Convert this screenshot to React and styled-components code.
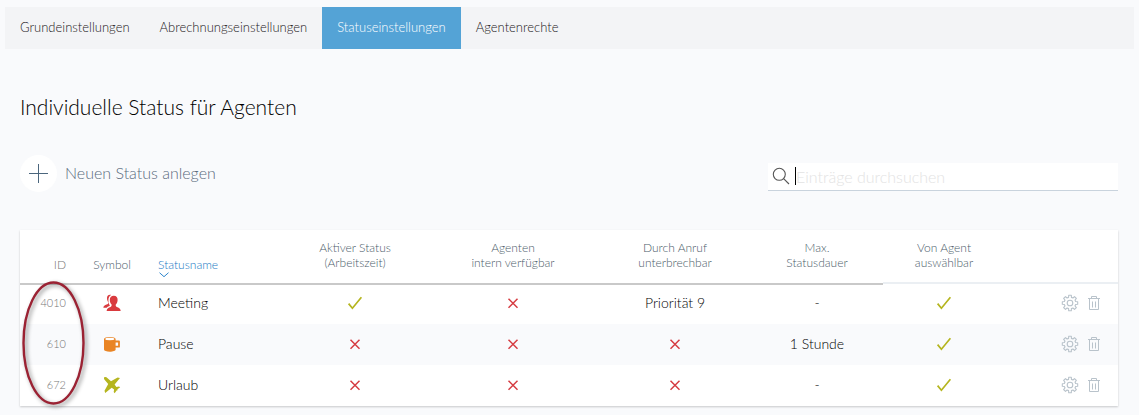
import React from 'react';
import styled, { createGlobalStyle, css } from 'styled-components';

const GlobalStyle = createGlobalStyle`
  * { box-sizing: border-box; }
  body {
    margin: 0;
    background: #f9fafc;
    font-family: Lato, "Liberation Sans", sans-serif;
    font-weight: 300;
    color: #000;
  }
`;

const Page = styled.div`
  padding: 7px 5px 9px;
`;

const TabBar = styled.nav`
  display: flex;
  background: #f3f4f6;
`;

const Tab = styled.a`
  padding: 0 15px 1px;
  font-size: 13px;
  line-height: 41px;
  text-decoration: none;
  white-space: nowrap;
  color: ${(p) => (p.$active ? '#fff' : '#1d2023')};
  background: ${(p) => (p.$active ? '#54a3d6' : 'transparent')};
`;

const Content = styled.main`
  padding: 43px 16px 0 15px;
`;

const Title = styled.h1`
  margin: 0;
  font-size: 21px;
  line-height: 30px;
  font-weight: 300;
`;

const Toolbar = styled.div`
  display: flex;
  justify-content: space-between;
  align-items: center;
  margin: 33px 0 38px;
`;

const AddButton = styled.button`
  display: flex;
  align-items: center;
  gap: 8px;
  padding: 0;
  border: 0;
  background: none;
  font: inherit;
  font-size: 16px;
  color: #5a6b7c;
  cursor: pointer;
`;

const AddLabel = styled.span`
  padding-bottom: 3px;
`;

const AddCircle = styled.span`
  display: flex;
  width: 37px;
  height: 37px;
  border-radius: 50%;
  background: #fff;
  align-items: center;
  justify-content: center;
`;

const SearchField = styled.label`
  display: flex;
  align-items: center;
  flex: 0 1 350px;
  height: 28px;
  margin-top: 6px;
  padding-left: 4px;
  background: #fff;
  border-bottom: 1px solid #c9d3dd;
`;

const Caret = styled.span`
  width: 1px;
  height: 18px;
  margin-left: 5px;
  background: #000;
`;

const SearchInput = styled.input`
  flex: 1;
  min-width: 0;
  padding: 0;
  border: 0;
  outline: 0;
  background: none;
  font: inherit;
  font-size: 16px;
  color: #111;
  &::placeholder { color: #e3e3e3; opacity: 1; }
`;

const Card = styled.section`
  position: relative;
  background: #fff;
  box-shadow: 0 1px 2px rgba(0, 0, 0, 0.2);
`;

const Table = styled.table`
  width: 100%;
  table-layout: fixed;
  border-collapse: collapse;
`;

const Col = styled.col`
  width: ${(p) => p.$w}px;
`;

const HeadCell = styled.th`
  height: 53px;
  padding: ${(p) => (p.$single ? '0 10px 11px' : '0 0 13px')};
  vertical-align: bottom;
  text-align: ${(p) => p.$align || 'center'};
  font-size: 12px;
  line-height: 15px;
  font-weight: 300;
  white-space: nowrap;
  color: ${(p) => p.$color || '#4c5d6a'};
  ${(p) => p.$light && css`box-shadow: inset 0 -1px 0 #ebeff3;`}
`;

const SortButton = styled.button`
  position: relative;
  display: block;
  padding: 0;
  border: 0;
  background: none;
  font: inherit;
  color: #2079c4;
  cursor: pointer;
  svg { position: absolute; left: 1px; top: 15px; }
`;

const Row = styled.tr`
  height: 41px;
  background: ${(p) => (p.$shaded ? '#f9fafc' : '#fff')};
  &:first-child td { box-shadow: inset 0 2px 0 #c9c9c9; }
  &:first-child td:nth-child(n + 8) { box-shadow: inset 0 1px 0 #ebeff3; }
`;

const Cell = styled.td`
  padding: 0 ${(p) => (p.$pad ? '10px' : '0')} 2px;
  text-align: ${(p) => p.$align || 'center'};
  font-size: ${(p) => (p.$muted ? '11px' : '14px')};
  color: ${(p) => (p.$muted ? '#777' : '#000')};
  white-space: nowrap;
  svg { display: block; margin: 0 auto; }
`;

const Actions = styled.div`
  display: flex;
  justify-content: flex-end;
  gap: 8px;
  padding-right: 17px;
`;

const IconButton = styled.button`
  padding: 0;
  border: 0;
  background: none;
  cursor: pointer;
`;

const Marker = styled.svg`
  position: absolute;
  left: 0;
  top: 48px;
  pointer-events: none;
  filter: drop-shadow(2px 2px 2px rgba(0, 0, 0, 0.45));
`;

const Check = () => (
  <svg width="16" height="16" viewBox="0 0 16 16" role="img" aria-label="Ja">
    <path d="M1.600 8.600 5.400 13.200 14.400 2.200" fill="none" stroke="#b5b51f" strokeWidth="1.7" />
  </svg>
);

const Cross = () => (
  <svg width="16" height="16" viewBox="0 0 16 16" role="img" aria-label="Nein">
    <path d="M3.5 3.8 12.5 12.8M12.5 3.8 3.5 12.8" stroke="#d63c42" strokeWidth="1.5" />
  </svg>
);

const People = () => (
  <svg width="18" height="18" viewBox="0 0 18 18" fill="#d93a3e">
    <path d="M8.200 1C5.500.3 3.800 2 4 4.600c.1 1.600.6 2.800 1.300 3.700.2 1-.1 1.600-1 2C2.200 11.100.6 11.400.3 13.700h3.400c.8-1 2-1.500 3.200-2C6 10.300 5.400 8.500 5.400 6.300 5.400 3.800 6.400 1.900 8.200 1Z" />
    <path d="M10.800 1.800c-2.700 0-4.100 1.800-4 4.300.1 2 .8 3.500 1.800 4.500.2 1.300-.2 2-1.100 2.400-1.900.8-3.600 1.200-3.900 4h14.100c-.3-2.800-2-3.200-3.900-4-.9-.4-1.300-1.100-1-2.400 1-1 1.700-2.500 1.800-4.500.1-2.500-1.100-4.300-3.800-4.300Z" />
  </svg>
);

const Cup = () => (
  <svg width="18" height="18" viewBox="0 0 18 18">
    <path d="M12 6.500h4v5.200h-4" fill="none" stroke="#e98424" strokeWidth="1.800" strokeLinejoin="round" />
    <path d="M1 4v10.500c0 1.300 2.600 2.200 5.800 2.200s5.800-.9 5.800-2.200V4c0-1.200-2.600-2.100-5.800-2.100S1 2.800 1 4Z" fill="#e98424" />
    <ellipse cx="6.800" cy="4" rx="4.600" ry="1.200" fill="#fff" />
  </svg>
);

const Plane = () => (
  <svg width="18" height="18" viewBox="0 0 18 18" fill="#b5b51f">
    <path d="M1.300 1.300C2.200.6 3.600 1.200 4.600 2.200L8 5.200l6.600-3.700L17 2.100 11.600 8.600l1.800 2.300 2.600-.5 1.200.9-2.800 2 .2 1-1 .1-1.900 2.800-1-1.200.4-2.600-2.400-1.700-6.500 5.400-.7-2.400L5.200 8 2.200 4.600C1.200 3.600.5 2.200 1.300 1.300Z" />
  </svg>
);

const gearPath = (() => {
  const points = [];
  for (let i = 0; i < 8; i += 1) {
    [[-0.25, 5.8], [-0.17, 7.8], [0.17, 7.8], [0.25, 5.8]].forEach(([d, r]) => {
      const a = (i * Math.PI) / 4 + d;
      points.push(`${(9 + r * Math.sin(a)).toFixed(2)} ${(9 - r * Math.cos(a)).toFixed(2)}`);
    });
  }
  return `M${points.join('L')}Z`;
})();

const Gear = () => (
  <svg width="18" height="18" viewBox="0 0 18 18" fill="none" stroke="#b9c3cb" strokeWidth="1.1" strokeLinejoin="round">
    <path d={gearPath} />
    <circle cx="9" cy="9" r="2.800" />
  </svg>
);

const Trash = () => (
  <svg width="14" height="18" viewBox="0 0 14 18" fill="none" stroke="#b9c3cb">
    <path d="M1 4.500h12M4.500 4V2.500h5V4M2.500 5v10.500h9V5M5.500 7.500v6M8.500 7.500v6" />
  </svg>
);

const rows = [
  { id: 4010, Icon: People, name: 'Meeting', active: true, intern: false, interrupt: 'Priorität 9', max: '-', selectable: true },
  { id: 610, Icon: Cup, name: 'Pause', active: false, intern: false, interrupt: false, max: '1 Stunde', selectable: true },
  { id: 672, Icon: Plane, name: 'Urlaub', active: false, intern: false, interrupt: false, max: '-', selectable: true },
];

const tabs = ['Grundeinstellungen', 'Abrechnungseinstellungen', 'Statuseinstellungen', 'Agentenrechte'];
const colWidths = [56, 72, 135, 144, 172, 152, 132, 122, 113];

const Value = ({ value }) => {
  if (value === true) return <Check />;
  if (value === false) return <Cross />;
  return value;
};

export default function App() {
  return (
    <Page>
      <GlobalStyle />
      <TabBar>
        {tabs.map((tab) => (
          <Tab key={tab} href="#" $active={tab === 'Statuseinstellungen'}>{tab}</Tab>
        ))}
      </TabBar>
      <Content>
        <Title>Individuelle Status für Agenten</Title>
        <Toolbar>
          <AddButton type="button">
            <AddCircle>
              <svg width="19" height="19" viewBox="0 0 19 19" stroke="#4b667d">
                <path d="M9.500 0v19M0 9.500h19" />
              </svg>
            </AddCircle>
            <AddLabel>Neuen Status anlegen</AddLabel>
          </AddButton>
          <SearchField>
            <svg width="18" height="18" viewBox="0 0 18 18" fill="none" stroke="#555" strokeWidth="1.1">
              <circle cx="7.300" cy="7.300" r="6" />
              <path d="m11.600 11.600 5.400 5.400" />
            </svg>
            <Caret />
            <SearchInput type="text" aria-label="Einträge durchsuchen" placeholder="Einträge durchsuchen" />
          </SearchField>
        </Toolbar>
        <Card>
          <Table>
            <colgroup>
              {colWidths.map((w, i) => <Col key={i} $w={w} />)}
            </colgroup>
            <thead>
              <tr>
                <HeadCell $single $align="right" $color="#777">ID</HeadCell>
                <HeadCell $single>Symbol</HeadCell>
                <HeadCell $single $align="left">
                  <SortButton type="button">
                    Statusname
                    <svg width="10" height="6" viewBox="0 0 10 6" fill="none" stroke="#2f86cc">
                      <path d="m.5.700 4.500 4 4.500-4" />
                    </svg>
                  </SortButton>
                </HeadCell>
                <HeadCell>Aktiver Status<br />(Arbeitszeit)</HeadCell>
                <HeadCell>Agenten<br />intern verfügbar</HeadCell>
                <HeadCell>Durch Anruf<br />unterbrechbar</HeadCell>
                <HeadCell>Max.<br />Statusdauer</HeadCell>
                <HeadCell $light>Von Agent<br />auswählbar</HeadCell>
                <HeadCell $light as="td" />
              </tr>
            </thead>
            <tbody>
              {rows.map(({ id, Icon, name, active, intern, interrupt, max, selectable }, i) => (
                <Row key={id} $shaded={i % 2 === 1}>
                  <Cell $muted $pad $align="right">{id}</Cell>
                  <Cell><Icon /></Cell>
                  <Cell $pad $align="left">{name}</Cell>
                  <Cell><Value value={active} /></Cell>
                  <Cell><Value value={intern} /></Cell>
                  <Cell><Value value={interrupt} /></Cell>
                  <Cell>{max}</Cell>
                  <Cell><Value value={selectable} /></Cell>
                  <Cell>
                    <Actions>
                      <IconButton type="button" aria-label={`${name} bearbeiten`}><Gear /></IconButton>
                      <IconButton type="button" aria-label={`${name} löschen`}><Trash /></IconButton>
                    </Actions>
                  </Cell>
                </Row>
              ))}
            </tbody>
          </Table>
          <Marker width="70" height="130" viewBox="0 0 70 130" aria-hidden="true">
            <ellipse cx="33.500" cy="65" rx="30" ry="60.500" fill="none" stroke="#9b2233" strokeWidth="2.400" />
          </Marker>
        </Card>
      </Content>
    </Page>
  );
}
